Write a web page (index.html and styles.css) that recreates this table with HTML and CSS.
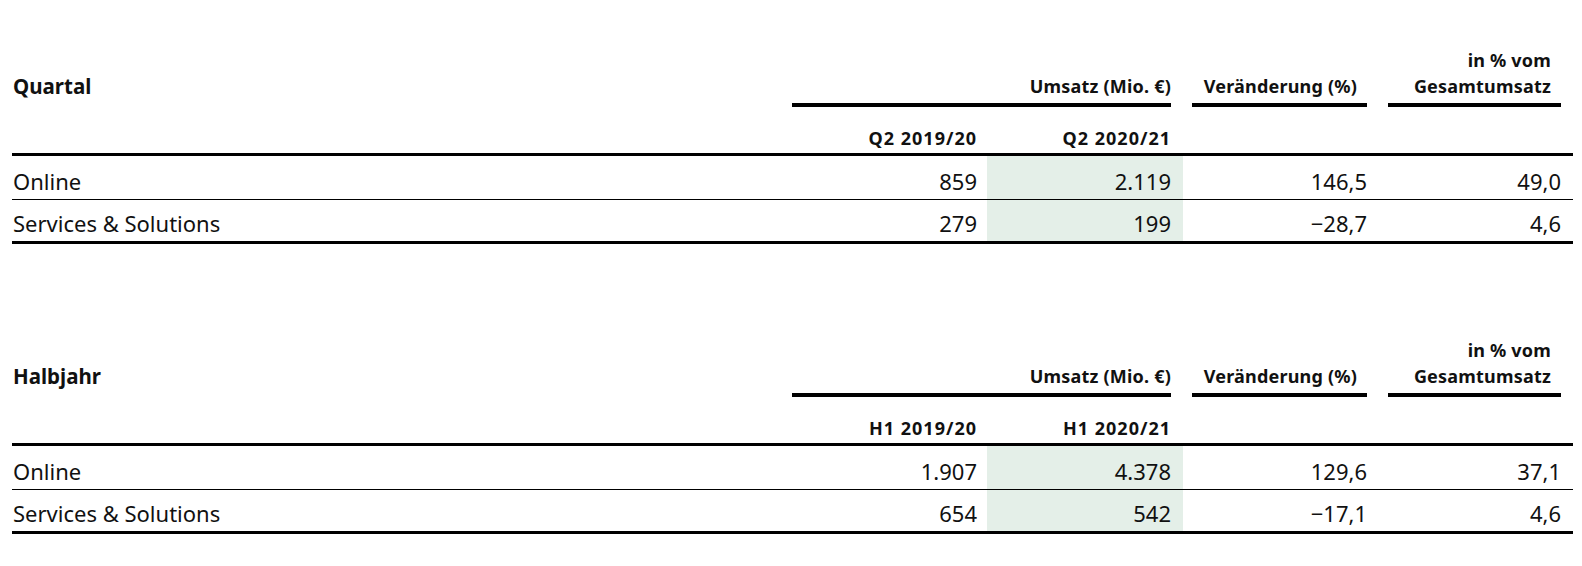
FILE: index.html
```html
<!DOCTYPE html>
<html lang="de">
<head>
<meta charset="utf-8">
<title>Umsatz</title>
<link rel="stylesheet" href="styles.css">
</head>
<body>
<main class="page">
  <table class="rev">
    <colgroup>
      <col class="c-label"><col class="c-num1"><col class="c-num2"><col class="c-num3"><col class="c-num4">
    </colgroup>
    <thead>
      <tr class="head-a">
        <th class="title">Quartal</th>
        <th colspan="2" class="grp"><div class="ul">Umsatz (Mio. €)</div></th>
        <th class="grp"><div class="ul pr">Veränderung (%)</div></th>
        <th class="grp"><div class="ul pr">in % vom<br>Gesamtumsatz</div></th>
      </tr>
      <tr class="head-b">
        <th></th>
        <th class="per n1">Q2 2019/20</th>
        <th class="per">Q2 2020/21</th>
        <th></th>
        <th></th>
      </tr>
    </thead>
    <tbody>
      <tr class="first">
        <td class="lab">Online</td><td class="n1">859</td><td class="hl">2.119</td><td>146,5</td><td>49,0</td>
      </tr>
      <tr class="last">
        <td class="lab">Services &amp; Solutions</td><td class="n1">279</td><td class="hl">199</td><td>−28,7</td><td>4,6</td>
      </tr>
    </tbody>
  </table>

  <table class="rev second">
    <colgroup>
      <col class="c-label"><col class="c-num1"><col class="c-num2"><col class="c-num3"><col class="c-num4">
    </colgroup>
    <thead>
      <tr class="head-a">
        <th class="title">Halbjahr</th>
        <th colspan="2" class="grp"><div class="ul">Umsatz (Mio. €)</div></th>
        <th class="grp"><div class="ul pr">Veränderung (%)</div></th>
        <th class="grp"><div class="ul pr">in % vom<br>Gesamtumsatz</div></th>
      </tr>
      <tr class="head-b">
        <th></th>
        <th class="per n1">H1 2019/20</th>
        <th class="per">H1 2020/21</th>
        <th></th>
        <th></th>
      </tr>
    </thead>
    <tbody>
      <tr class="first">
        <td class="lab">Online</td><td class="n1">1.907</td><td class="hl">4.378</td><td>129,6</td><td>37,1</td>
      </tr>
      <tr class="last">
        <td class="lab">Services &amp; Solutions</td><td class="n1">654</td><td class="hl">542</td><td>−17,1</td><td>4,6</td>
      </tr>
    </tbody>
  </table>
</main>
</body>
</html>
```
FILE: styles.css
```css
html, body {
  margin: 0;
  padding: 0;
  background: #fff;
}
body {
  font-family: "Noto Sans", "Open Sans", sans-serif;
  color: #111;
}
.page {
  padding: 47px 9px 0 12px;
}
.rev {
  width: 1561px;
  table-layout: fixed;
  border-collapse: separate;
  border-spacing: 0;
}
.rev.second {
  margin-top: 93px;
}
.c-label { width: 771px; }
.c-num1 { width: 204px; }
.c-num2 { width: 196px; }
.c-num3 { width: 196px; }
.c-num4 { width: 194px; }

.rev th,
.rev td {
  padding: 0 12px 0 9px;
  text-align: right;
  font-weight: 400;
}
.rev .n1 { padding-right: 10px; }

/* header row A */
.head-a th {
  vertical-align: bottom;
  font-size: 18px;
  line-height: 26px;
  font-weight: 700;
  letter-spacing: 0.2px;
}
.head-a th.title {
  text-align: left;
  padding: 0 0 8px 1px;
  font-size: 20.5px;
  letter-spacing: 0;
}
.ul {
  border-bottom: 4px solid #000;
  padding-bottom: 4px;
}
.ul.pr { padding-right: 10px; }

/* header row B */
.head-b th {
  border-bottom: 3px solid #000;
  padding-top: 18px;
  padding-bottom: 2px;
  font-size: 18px;
  line-height: 26px;
  font-weight: 700;
  letter-spacing: 1px;
}
.head-b th:first-child { padding: 0; }

/* body rows */
.rev td {
  font-size: 22px;
  line-height: 26px;
  padding-top: 10px;
  padding-bottom: 5px;
}
.rev td.lab {
  text-align: left;
  padding-left: 1px;
}
.rev tr.first td {
  padding-top: 12px;
  border-bottom: 1px solid #000;
}
.rev tr.last td {
  border-bottom: 3px solid #000;
}
.rev td.hl {
  background: #e4efe8;
}
```
